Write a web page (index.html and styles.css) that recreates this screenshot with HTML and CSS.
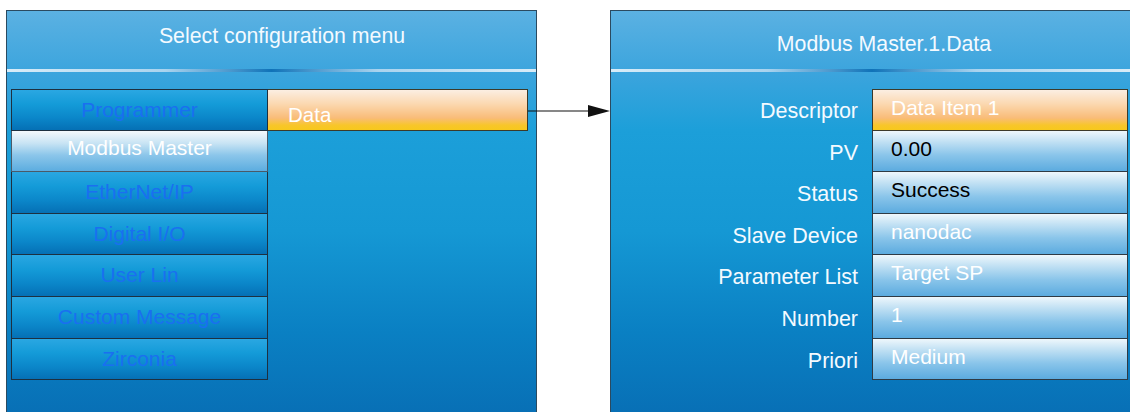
FILE: index.html
```html
<!DOCTYPE html>
<html lang="en">
<head>
    <meta charset="UTF-8">
    <title>Modbus Master configuration</title>
    <link rel="stylesheet" href="styles.css">
</head>
<body>
    <div class="screens">
        <!-- Ecran gauche : menu de configuration -->
        <div class="panel panel-left">
            <div class="panel-title">Select configuration menu</div>
            <div class="divider"></div>
            <div class="menu">
                <ul class="menu-list">
                    <li class="menu-item">Programmer</li>
                    <li class="menu-item selected">Modbus Master</li>
                    <li class="menu-item">EtherNet/IP</li>
                    <li class="menu-item">Digital I/O</li>
                    <li class="menu-item">User Lin</li>
                    <li class="menu-item">Custom Message</li>
                    <li class="menu-item">Zirconia</li>
                </ul>
                <div class="submenu">
                    <div class="sub-item">Data</div>
                </div>
            </div>
        </div>

        <div class="connector">
            <svg width="82" height="14" viewBox="0 0 82 14">
                <line x1="0" y1="7" x2="62" y2="7" stroke="#111" stroke-width="1.2"/>
                <polygon points="60,1 82,7 60,13" fill="#111"/>
            </svg>
        </div>

        <!-- Ecran droit : parametres -->
        <div class="panel panel-right">
            <div class="panel-title title-right">Modbus Master.1.Data</div>
            <div class="divider"></div>
            <div class="params">
                <div class="param-label">Descriptor</div>
                <div class="param-value active">Data Item 1</div>

                <div class="param-label">PV</div>
                <div class="param-value dark">0.00</div>

                <div class="param-label">Status</div>
                <div class="param-value dark">Success</div>

                <div class="param-label">Slave Device</div>
                <div class="param-value">nanodac</div>

                <div class="param-label">Parameter List</div>
                <div class="param-value">Target SP</div>

                <div class="param-label">Number</div>
                <div class="param-value">1</div>

                <div class="param-label">Priori</div>
                <div class="param-value">Medium</div>
            </div>
        </div>
    </div>
</body>
</html>
```

FILE: styles.css
```css
body {
    margin: 0;
    padding: 0;
    background-color: #fff;
    font-family: "Liberation Sans", Arial, sans-serif;
    overflow: hidden;
}

.screens {
    display: flex;
    align-items: flex-start;
    padding: 10px 0 0 6px;
    width: 1200px;
}

/* Panneaux bleus */
.panel {
    height: 402px;
    box-sizing: border-box;
    border: 1px solid #2b4a60;
    border-bottom: none;
    background: linear-gradient(to bottom, #5bb1e2 0%, #3aa4dd 16%, #1c9fd9 30%, #1598d4 55%, #0a80c3 80%, #0870b6 100%);
    color: #f4faff;
}

.panel-left {
    width: 531px;
}

.panel-right {
    width: 524px;
}

.panel-title {
    height: 52px;
    padding: 13px 0 0 21px;
    box-sizing: border-box;
    text-align: center;
    font-size: 21.3px;
}

.title-right {
    padding-top: 21px;
    padding-left: 24px;
}

.divider {
    height: 3px;
    margin-top: 6px;
    background: linear-gradient(to right, #d8ecf8 0%, #a9d3ee 30%, #0f72b8 50%, #a9d3ee 70%, #d8ecf8 100%);
}

/* Menu de gauche */
.menu {
    display: flex;
    margin: 17px 0 0 4px;
}

.menu-list {
    list-style: none;
    margin: 0;
    padding: 0;
    width: 257px;
}

.menu-item {
    height: 41.6px;
    box-sizing: border-box;
    border: 1px solid #1d3040;
    border-top-width: 0;
    background: linear-gradient(to bottom, #2aa7e2 0%, #149bd8 35%, #0b86c9 70%, #0570b5 100%);
    color: #1a6ff0;
    font-size: 21px;
    text-align: center;
    line-height: 40px;
}

.menu-item:first-child {
    border-top-width: 1px;
}

.menu-item.selected {
    background: linear-gradient(to bottom, #f4f9fc 0%, #c9e4f4 30%, #8cc6ea 60%, #5cade0 100%);
    color: #fff;
    line-height: 34px;
    border-color: #4a5a68;
}

.submenu {
    width: 260px;
}

.sub-item {
    height: 41.6px;
    box-sizing: border-box;
    border: 1px solid #3c3a2a;
    border-left: none;
    background: linear-gradient(to bottom, #fbeee2 0%, #fbd8b0 35%, #f9bc78 70%, #f8c62a 88%, #f7c81c 100%);
    color: #fff;
    font-size: 20.5px;
    padding: 13px 0 0 20px;
}

/* Fleche entre les ecrans */
.connector {
    width: 82px;
    margin: 94px 0 0 -9px;
    position: relative;
    z-index: 1;
}

.connector svg {
    display: block;
}

/* Parametres de droite */
.params {
    display: grid;
    grid-template-columns: 261px 256px;
    grid-auto-rows: 41.6px;
    margin-top: 17px;
}

.param-label {
    text-align: right;
    padding: 2px 14px 0 0;
    font-size: 21.5px;
    line-height: 41px;
    color: #f4faff;
}

.param-value {
    box-sizing: border-box;
    border: 1px solid #2e3a44;
    border-top-width: 0;
    background: linear-gradient(to bottom, #eef7fc 0%, #c4e2f4 25%, #8ac5ea 60%, #5cabdf 100%);
    color: #fff;
    font-size: 21px;
    line-height: 36px;
    padding-left: 18px;
}

.param-value.active {
    border-top-width: 1px;
    border-color: #3c3a2a;
    background: linear-gradient(to bottom, #fbeee2 0%, #fbd8b0 35%, #f9bc78 70%, #f8c62a 88%, #f7c81c 100%);
}

.param-value.dark {
    color: #000;
}
```
